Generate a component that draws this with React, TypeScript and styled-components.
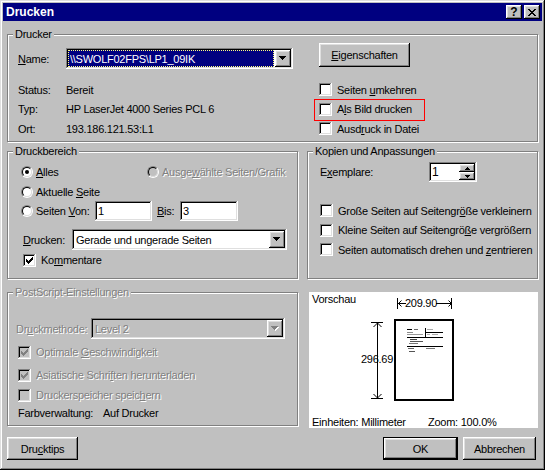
import React from 'react';
import styled, { createGlobalStyle, css } from 'styled-components';

const GlobalStyle = createGlobalStyle`
  html, body {
    margin: 0;
    padding: 0;
    background: #c0c0c0;
  }
  body {
    font-family: 'Liberation Sans', Arial, sans-serif;
    font-size: 11px;
    letter-spacing: -0.25px;
    color: #000;
  }
  * {
    box-sizing: border-box;
  }
`;

const raised = css`
  background: #c0c0c0;
  box-shadow: inset -1px -1px #000, inset 1px 1px #fff, inset -2px -2px #808080,
    inset 2px 2px #dfdfdf;
`;

const sunken = css`
  box-shadow: inset -1px -1px #fff, inset 1px 1px #808080, inset -2px -2px #dfdfdf,
    inset 2px 2px #000;
`;

const disabledText = css`
  color: #808080;
  text-shadow: 1px 1px #fff;
`;

const Window = styled.div`
  width: 545px;
  height: 470px;
  padding: 3px;
  background: #c0c0c0;
  box-shadow: inset -1px -1px #000, inset 1px 1px #dfdfdf, inset -2px -2px #808080,
    inset 2px 2px #fff;
  display: flex;
  flex-direction: column;
`;

const TitleBar = styled.div`
  height: 18px;
  background: #000080;
  color: #fff;
  display: flex;
  align-items: center;
  padding: 0 2px 0 3px;
`;

const TitleText = styled.span`
  flex: 1;
  font-weight: bold;
  font-size: 12px;
  letter-spacing: 0;
`;

const TitleButtons = styled.div`
  display: flex;
  gap: 2px;
`;

const TitleButton = styled.span`
  ${raised};
  width: 16px;
  height: 14px;
  display: flex;
  align-items: center;
  justify-content: center;
  color: #000;
  font-weight: bold;
  font-size: 12px;
  letter-spacing: 0;
  line-height: 14px;
`;

const Body = styled.div`
  flex: 1;
  padding: 7px 4px 0 4px;
  display: flex;
  flex-direction: column;
`;

const GroupBox = styled.fieldset<{ $h: number }>`
  margin: 0;
  padding: 0;
  min-width: 0;
  height: ${(p) => p.$h}px;
  border: 1px solid #808080;
  box-shadow: inset 1px 1px #fff, 1px 1px #fff;
`;

const Legend = styled.legend<{ $disabled?: boolean }>`
  margin-left: 5px;
  padding: 0 2px;
  line-height: 13px;
  background: #c0c0c0;
  ${(p) => p.$disabled && disabledText};
`;

const Key = styled.span`
  text-decoration: underline;
`;

const PrinterGrid = styled.div`
  display: grid;
  grid-template-columns: 301px 1fr;
  grid-template-rows: 37px repeat(3, 19.5px);
  align-items: center;
  padding: 2px 0 0 10px;
`;

const NameField = styled.div`
  align-self: start;
  margin-top: 5px;
  display: flex;
  align-items: center;
`;

const FieldLabel = styled.span<{ $w: number; $pl?: number; $disabled?: boolean }>`
  width: ${(p) => p.$w}px;
  padding-left: ${(p) => p.$pl ?? 0}px;
  flex-shrink: 0;
  ${(p) => p.$disabled && disabledText};
`;

const InfoRow = styled.div`
  display: flex;
  align-items: center;
`;

const Combo = styled.div<{ $w: number; $disabled?: boolean }>`
  ${sunken};
  background: ${(p) => (p.$disabled ? '#c0c0c0' : '#fff')};
  width: ${(p) => p.$w}px;
  height: 21px;
  padding: 2px;
  display: flex;
`;

const ComboText = styled.span<{ $selected?: boolean; $disabled?: boolean }>`
  flex: 1;
  display: flex;
  align-items: center;
  padding-left: 2px;
  white-space: nowrap;
  overflow: hidden;
  ${(p) =>
    p.$selected &&
    css`
      background: #000080;
      color: #fff;
      outline: 1px dotted #ffff7f;
      outline-offset: -1px;
      margin-right: 1px;
    `};
  ${(p) => p.$disabled && disabledText};
`;

const ComboButton = styled.span`
  ${raised};
  width: 16px;
  display: flex;
  align-items: center;
  justify-content: center;
`;

const Button = styled.button<{ $w: number; $h?: number; $default?: boolean }>`
  ${raised};
  width: ${(p) => p.$w}px;
  height: ${(p) => p.$h ?? 23}px;
  border: ${(p) => (p.$default ? '1px solid #000' : 'none')};
  padding: 0;
  font: inherit;
  letter-spacing: inherit;
  color: #000;
  align-self: start;
  display: flex;
  align-items: center;
  justify-content: center;
`;

const CheckOption = styled.label<{ $disabled?: boolean; $highlight?: boolean; $ml?: number }>`
  position: relative;
  display: flex;
  align-items: center;
  align-self: stretch;
  margin-left: ${(p) => p.$ml ?? 0}px;
  ${(p) => p.$disabled && disabledText};
  ${(p) =>
    p.$highlight &&
    css`
      width: max-content;
      &::after {
        content: '';
        position: absolute;
        left: -5px;
        right: -13px;
        top: -1px;
        bottom: -2px;
        border: 1px solid #ff0000;
      }
    `};
`;

const CheckBox = styled.span<{ $disabled?: boolean }>`
  ${sunken};
  background: ${(p) => (p.$disabled ? '#c0c0c0' : '#fff')};
  width: 13px;
  height: 13px;
  flex-shrink: 0;
  margin-right: 5px;
  display: flex;
  align-items: center;
  justify-content: center;
  text-shadow: none;
`;

const RadioOption = styled.label<{ $w?: number; $disabled?: boolean }>`
  display: flex;
  align-items: center;
  width: ${(p) => (p.$w ? `${p.$w}px` : 'auto')};
  flex-shrink: 0;
  ${(p) => p.$disabled && disabledText};
`;

const RadioOuter = styled.span`
  width: 12px;
  height: 12px;
  border-radius: 50%;
  border: 1px solid;
  border-color: #808080 #fff #fff #808080;
  display: flex;
  flex-shrink: 0;
  margin-right: 3px;
`;

const RadioInner = styled.span<{ $disabled?: boolean }>`
  flex: 1;
  border-radius: 50%;
  border: 1px solid;
  border-color: #000 #dfdfdf #dfdfdf #000;
  background: ${(p) => (p.$disabled ? '#c0c0c0' : '#fff')};
  display: flex;
  align-items: center;
  justify-content: center;
`;

const RadioDot = styled.span`
  width: 4px;
  height: 4px;
  border-radius: 50%;
  background: #000;
`;

const TextBox = styled.span<{ $w: number }>`
  ${sunken};
  background: #fff;
  width: ${(p) => p.$w}px;
  height: 20px;
  padding-left: 3px;
  display: flex;
  align-items: center;
  flex-shrink: 0;
`;

const Lower = styled.div`
  margin-top: 3px;
  display: grid;
  grid-template-columns: 291px 231px;
  grid-template-rows: 141px 151px 23px;
  column-gap: 9px;
  align-items: start;
`;

const Stack = styled.div<{ $pt: number; $pl: number }>`
  display: flex;
  flex-direction: column;
  padding: ${(p) => p.$pt}px 0 0 ${(p) => p.$pl}px;
`;

const Line = styled.div<{ $h: number; $mt?: number; $ml?: number }>`
  display: flex;
  align-items: center;
  height: ${(p) => p.$h}px;
  margin-top: ${(p) => p.$mt ?? 0}px;
  margin-left: ${(p) => p.$ml ?? 0}px;
`;

const Spin = styled.div`
  ${sunken};
  background: #fff;
  width: 48px;
  height: 20px;
  padding: 2px;
  display: flex;
`;

const SpinText = styled.span`
  flex: 1;
  display: flex;
  align-items: center;
  padding-left: 1px;
  font-size: 12px;
`;

const SpinButtons = styled.span`
  width: 16px;
  display: flex;
  flex-direction: column;
`;

const SpinButton = styled.span`
  ${raised};
  flex: 1;
  display: flex;
  align-items: center;
  justify-content: center;
`;

const Preview = styled.div`
  margin: 6px 0 0 2px;
  height: 136px;
  background: #fff;
  display: grid;
  grid-template-rows: 1fr 12px;
`;

const PreviewCanvas = styled.div`
  display: grid;
  & > * {
    grid-area: 1 / 1;
  }
`;

const PreviewCaption = styled.span`
  align-self: start;
  padding: 1px 0 0 3px;
  line-height: 13px;
`;

const PreviewFooter = styled.div`
  display: flex;
  align-items: center;
  padding-left: 3px;
  line-height: 12px;
`;

const FooterItem = styled.span<{ $w?: number }>`
  width: ${(p) => (p.$w ? `${p.$w}px` : 'auto')};
`;

const ButtonBar = styled.div`
  display: flex;
  justify-content: flex-end;
  gap: 5px;
  padding-right: 2px;
`;

const CloseIcon = () => (
  <svg width="8" height="7" viewBox="0 0 8 7" shapeRendering="crispEdges">
    <path
      fill="#000"
      d="M0 0h2v1H0zM6 0h2v1H6zM1 1h2v1H1zM5 1h2v1H5zM2 2h4v1H2zM3 3h2v1H3zM2 4h4v1H2zM1 5h2v1H1zM5 5h2v1H5zM0 6h2v1H0zM6 6h2v1H6z"
    />
  </svg>
);

const checkPath =
  'M0 2h1v3H0zM1 3h1v3H1zM2 4h1v3H2zM3 3h1v3H3zM4 2h1v3H4zM5 1h1v3H5zM6 0h1v3H6z';

const CheckMark = ({ color = '#000' }: { color?: string }) => (
  <svg width="7" height="7" viewBox="0 0 7 7" shapeRendering="crispEdges">
    <path fill={color} d={checkPath} />
  </svg>
);

const arrowPath = 'M0 0h7v1H0zM1 1h5v1H1zM2 2h3v1H2zM3 3h1v1H3z';

const DropArrow = ({ disabled }: { disabled?: boolean }) => (
  <svg width="8" height="5" viewBox="0 0 8 5" shapeRendering="crispEdges">
    {disabled && <path fill="#fff" transform="translate(1 1)" d={arrowPath} />}
    <path fill={disabled ? '#808080' : '#000'} d={arrowPath} />
  </svg>
);

const SpinArrow = ({ up }: { up?: boolean }) => (
  <svg width="5" height="3" viewBox="0 0 5 3" shapeRendering="crispEdges">
    <path
      fill="#000"
      d={up ? 'M2 0h1v1H2zM1 1h3v1H1zM0 2h5v1H0z' : 'M0 0h5v1H0zM1 1h3v1H1zM2 2h1v1H2z'}
    />
  </svg>
);

function Check({
  label,
  checked,
  disabled,
  highlight,
  ml,
}: {
  label: React.ReactNode;
  checked?: boolean;
  disabled?: boolean;
  highlight?: boolean;
  ml?: number;
}) {
  return (
    <CheckOption $disabled={disabled} $highlight={highlight} $ml={ml}>
      <CheckBox $disabled={disabled}>
        {checked && <CheckMark color={disabled ? '#808080' : '#000'} />}
      </CheckBox>
      {label}
    </CheckOption>
  );
}

function Radio({
  label,
  checked,
  disabled,
  w,
}: {
  label: React.ReactNode;
  checked?: boolean;
  disabled?: boolean;
  w?: number;
}) {
  return (
    <RadioOption $w={w} $disabled={disabled}>
      <RadioOuter>
        <RadioInner $disabled={disabled}>{checked && <RadioDot />}</RadioInner>
      </RadioOuter>
      {label}
    </RadioOption>
  );
}

// miniature of the page in the preview: dimension lines, sheet, scribbles
function PreviewDrawing() {
  return (
    <svg width="229" height="124" viewBox="0 0 229 124" shapeRendering="crispEdges">
      <g stroke="#000" strokeWidth="1" fill="none">
        <path d="M88.5 6v11M142.5 6v11" />
        <path d="M89 11.5h8M92.5 8.5l-3 3 3 3" shapeRendering="auto" />
        <path d="M127 11.5h15M139.5 8.5l3 3-3 3" shapeRendering="auto" />
        <path d="M62 30.5h12M62 106.5h12M68.5 31v75" />
        <path d="M64.5 35l4-4 4 4M64.5 102l4 4 4-4" shapeRendering="auto" />
        <rect x="86" y="28" width="58" height="80" strokeWidth="2" />
      </g>
      <g fill="#000">
        <rect x="98" y="37" width="5" height="1" />
        <rect x="105" y="37" width="4" height="1" fill="#666" />
        <rect x="98" y="40" width="6" height="1" fill="#888" />
        <rect x="98" y="42" width="16" height="1" fill="#999" />
        <rect x="116" y="36" width="1" height="9" />
        <rect x="116" y="40" width="18" height="1" />
        <rect x="118" y="37" width="6" height="1" fill="#aaa" />
        <rect x="118" y="42" width="3" height="1" fill="#aaa" />
        <rect x="123" y="42" width="6" height="1" fill="#aaa" />
        <rect x="98" y="45" width="36" height="1" />
        <rect x="101" y="47" width="7" height="1" fill="#444" />
        <rect x="101" y="49" width="13" height="1" fill="#555" />
        <rect x="100" y="51" width="9" height="1" fill="#777" />
        <rect x="98" y="54" width="36" height="1" />
        <rect x="99" y="56" width="6" height="1" fill="#666" />
        <rect x="100" y="59" width="6" height="1" fill="#555" />
        <rect x="117" y="56" width="9" height="1" fill="#777" />
      </g>
      <g
        fontFamily="'Liberation Sans', Arial, sans-serif"
        fontSize="11"
        letterSpacing="-0.25"
        fill="#000"
        textAnchor="middle"
      >
        <text x="112" y="15">209.90</text>
        <text x="68" y="71">296.69</text>
      </g>
    </svg>
  );
}

export default function App() {
  return (
    <>
      <GlobalStyle />
      <Window>
        <TitleBar>
          <TitleText>Drucken</TitleText>
          <TitleButtons>
            <TitleButton>?</TitleButton>
            <TitleButton>
              <CloseIcon />
            </TitleButton>
          </TitleButtons>
        </TitleBar>
        <Body>
          <GroupBox $h={114}>
            <Legend>Drucker</Legend>
            <PrinterGrid>
              <NameField>
                <FieldLabel $w={48}>
                  <Key>N</Key>ame:
                </FieldLabel>
                <Combo $w={227}>
                  <ComboText $selected>\\SWOLF02FPS\LP1_09IK</ComboText>
                  <ComboButton>
                    <DropArrow />
                  </ComboButton>
                </Combo>
              </NameField>
              <Button $w={91} $h={24}>
                <span>
                  <Key>E</Key>igenschaften
                </span>
              </Button>
              <InfoRow>
                <FieldLabel $w={48}>Status:</FieldLabel>Bereit
              </InfoRow>
              <Check
                label={
                  <span>
                    Seiten <Key>u</Key>mkehren
                  </span>
                }
              />
              <InfoRow>
                <FieldLabel $w={48}>Typ:</FieldLabel>HP LaserJet 4000 Series PCL 6
              </InfoRow>
              <Check
                highlight
                label={
                  <span>
                    A<Key>l</Key>s Bild drucken
                  </span>
                }
              />
              <InfoRow>
                <FieldLabel $w={48}>Ort:</FieldLabel>193.186.121.53:L1
              </InfoRow>
              <Check
                label={
                  <span>
                    Ausd<Key>r</Key>uck in Datei
                  </span>
                }
              />
            </PrinterGrid>
          </GroupBox>

          <Lower>
            <GroupBox $h={134}>
              <Legend>Druckbereich</Legend>
              <Stack $pt={4} $pl={13}>
                <Line $h={20}>
                  <Radio
                    checked
                    w={126}
                    label={
                      <span>
                        <Key>A</Key>lles
                      </span>
                    }
                  />
                  <Radio
                    disabled
                    label={
                      <span>
                        Ausge<Key>w</Key>ählte Seiten/Grafik
                      </span>
                    }
                  />
                </Line>
                <Line $h={19}>
                  <Radio
                    label={
                      <span>
                        Aktuelle <Key>S</Key>eite
                      </span>
                    }
                  />
                </Line>
                <Line $h={20}>
                  <Radio
                    w={74}
                    label={
                      <span>
                        Seiten <Key>V</Key>on:
                      </span>
                    }
                  />
                  <TextBox $w={57}>1</TextBox>
                  <FieldLabel $w={28} $pl={5}>
                    <Key>B</Key>is:
                  </FieldLabel>
                  <TextBox $w={58}>3</TextBox>
                </Line>
                <Line $h={21} $mt={8} $ml={2}>
                  <FieldLabel $w={49}>
                    <Key>D</Key>rucken:
                  </FieldLabel>
                  <Combo $w={215}>
                    <ComboText>Gerade und ungerade Seiten</ComboText>
                    <ComboButton>
                      <DropArrow />
                    </ComboButton>
                  </Combo>
                </Line>
                <Line $h={18} $mt={1}>
                  <Check
                    checked
                    ml={2}
                    label={
                      <span>
                        Ko<Key>m</Key>mentare
                      </span>
                    }
                  />
                </Line>
              </Stack>
            </GroupBox>

            <GroupBox $h={134}>
              <Legend>Kopien und Anpassungen</Legend>
              <Stack $pt={4} $pl={12}>
                <Line $h={20}>
                  <FieldLabel $w={109}>
                    E<Key>x</Key>emplare:
                  </FieldLabel>
                  <Spin>
                    <SpinText>1</SpinText>
                    <SpinButtons>
                      <SpinButton>
                        <SpinArrow up />
                      </SpinButton>
                      <SpinButton>
                        <SpinArrow />
                      </SpinButton>
                    </SpinButtons>
                  </Spin>
                </Line>
                <Line $h={19.5} $mt={19}>
                  <Check
                    label={
                      <span>
                        Große Seiten auf Seitengr<Key>ö</Key>ße verkleinern
                      </span>
                    }
                  />
                </Line>
                <Line $h={19.5}>
                  <Check
                    label={
                      <span>
                        Kleine Seiten auf Seitengrö<Key>ß</Key>e vergrößern
                      </span>
                    }
                  />
                </Line>
                <Line $h={19.5}>
                  <Check
                    label={
                      <span>
                        Seiten automatisch drehen und <Key>z</Key>entrieren
                      </span>
                    }
                  />
                </Line>
              </Stack>
            </GroupBox>

            <GroupBox $h={140}>
              <Legend $disabled>PostScript-Einstellungen</Legend>
              <Stack $pt={19} $pl={8}>
                <Line $h={21}>
                  <FieldLabel $w={75} $disabled>
                    Dr<Key>u</Key>ckmethode:
                  </FieldLabel>
                  <Combo $w={194} $disabled>
                    <ComboText $disabled>Level 2</ComboText>
                    <ComboButton>
                      <DropArrow disabled />
                    </ComboButton>
                  </Combo>
                </Line>
                <Line $h={20} $mt={3}>
                  <Check
                    checked
                    disabled
                    ml={2}
                    label={
                      <span>
                        Optimale <Key>G</Key>eschwindigkeit
                      </span>
                    }
                  />
                </Line>
                <Line $h={20} $mt={3}>
                  <Check
                    checked
                    disabled
                    ml={2}
                    label={
                      <span>
                        Asiatische Schri<Key>f</Key>ten herunterladen
                      </span>
                    }
                  />
                </Line>
                <Line $h={20}>
                  <Check
                    disabled
                    ml={2}
                    label={
                      <span>
                        Druckerspeicher speic<Key>h</Key>ern
                      </span>
                    }
                  />
                </Line>
                <Line $h={16} $ml={2}>
                  <FieldLabel $w={85}>Farbverwaltung:</FieldLabel>
                  Auf Drucker
                </Line>
              </Stack>
            </GroupBox>

            <Preview>
              <PreviewCanvas>
                <PreviewCaption>Vorschau</PreviewCaption>
                <PreviewDrawing />
              </PreviewCanvas>
              <PreviewFooter>
                <FooterItem $w={116}>Einheiten: Millimeter</FooterItem>
                <FooterItem>Zoom: 100.0%</FooterItem>
              </PreviewFooter>
            </Preview>

            <Button $w={71}>
              <span>
                Dru<Key>c</Key>ktips
              </span>
            </Button>
            <ButtonBar>
              <Button $w={75} $default>
                OK
              </Button>
              <Button $w={73}>Abbrechen</Button>
            </ButtonBar>
          </Lower>
        </Body>
      </Window>
    </>
  );
}
